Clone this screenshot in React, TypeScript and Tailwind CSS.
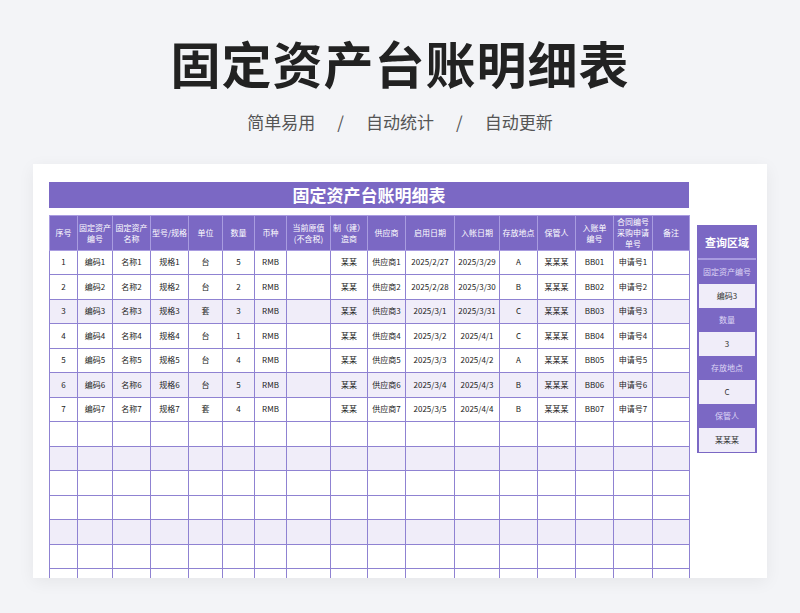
import React from "react";

const cols = [28, 35, 38, 38, 34, 32, 32, 44, 37, 38, 49, 45, 38, 38, 38, 39, 37];
const heads = ["序号", "固定资产\n编号", "固定资产\n名称", "型号/规格", "单位", "数量", "币种", "当前原值\n(不含税)", "制（建）\n造商", "供应商", "启用日期", "入帐日期", "存放地点", "保管人", "入账单\n编号", "合同编号\n采购申请\n单号", "备注"];
const units = ["台", "台", "套", "台", "台", "台", "套"];
const qty = [5, 2, 3, 1, 4, 5, 4];
const d1 = ["2025/2/27", "2025/2/28", "2025/3/1", "2025/3/2", "2025/3/3", "2025/3/4", "2025/3/5"];
const d2 = ["2025/3/29", "2025/3/30", "2025/3/31", "2025/4/1", "2025/4/2", "2025/4/3", "2025/4/4"];
const loc = ["A", "B", "C", "C", "A", "B", "B"];
const rows: string[][] = [];
for (let i = 0; i < 14; i++) {
  if (i < 7) {
    const n = i + 1;
    rows.push([String(n), "编码" + n, "名称" + n, "规格" + n, units[i], String(qty[i]), "RMB", "", "某某", "供应商" + n, d1[i], d2[i], loc[i], "某某某", "BB0" + n, "申请号" + n, ""]);
  } else rows.push(Array(17).fill(""));
}

const side = [["固定资产编号", "编码3"], ["数量", "3"], ["存放地点", "C"], ["保管人", "某某某"]];

export default function App() {
  return (
    <div className="w-[800px] h-[613px] bg-[#f3f4f7] overflow-hidden flex flex-col items-center" style={{ fontFamily: '"Noto Sans CJK SC", "Noto Sans", sans-serif' }}>
      <h1 className="mt-[31px] text-[50px] leading-[62px] font-bold text-[#222] tracking-[1px]">固定资产台账明细表</h1>
      <div className="mt-[17px] text-[17px] leading-[24px] text-[#555] flex gap-[22px]">
        <span>简单易用</span><span>/</span><span>自动统计</span><span>/</span><span>自动更新</span>
      </div>
      <div className="mt-[30px] w-[734px] h-[414px] overflow-hidden bg-white shadow-[0_4px_16px_rgba(0,0,0,0.06)] flex pl-[16px] pt-[18px] gap-[8px]">
        <div className="w-[640px] flex flex-col">
          <div className="h-[36px] bg-[#7b68c4] text-white text-[17px] font-bold flex items-center justify-center">固定资产台账明细表</div>
          <table className="mt-[7px] border-collapse table-fixed w-[640px] text-[8px] text-[#222]">
            <colgroup>{cols.map((w, i) => <col key={i} style={{ width: w }} />)}</colgroup>
            <thead>
              <tr className="h-[35px]">
                {heads.map((h, i) => (
                  <th key={i} className="bg-[#7b68c4] text-white font-normal border border-[#a99ce0] leading-[11px] whitespace-pre-line p-0">{h}</th>
                ))}
              </tr>
            </thead>
            <tbody>
              {rows.map((r, ri) => (
                <tr key={ri} className={"h-[24.5px] " + (ri % 3 === 2 ? "bg-[#f0edf9]" : "bg-white")}>
                  {r.map((c, ci) => (
                    <td key={ci} className="border border-[#8f82d2] text-center p-0">{c}</td>
                  ))}
                </tr>
              ))}
            </tbody>
          </table>
        </div>
        <div className="mt-[43px] w-[60px] self-start border border-[#7b68c4] bg-[#7b68c4]">
          <div className="h-[34px] flex items-center justify-center text-white text-[11px] font-bold border-b-2 border-[#a99ce0]">查询区域</div>
          {side.map(([a, b], i) => (
            <React.Fragment key={i}>
              <div className="h-[24px] flex items-center justify-center text-[#ddd6f5] text-[8px]">{a}</div>
              <div className="h-[24px] flex items-center justify-center bg-[#f0edf9] text-[#333] text-[8px] border-x border-[#7b68c4]">{b}</div>
            </React.Fragment>
          ))}
        </div>
      </div>
    </div>
  );
}
